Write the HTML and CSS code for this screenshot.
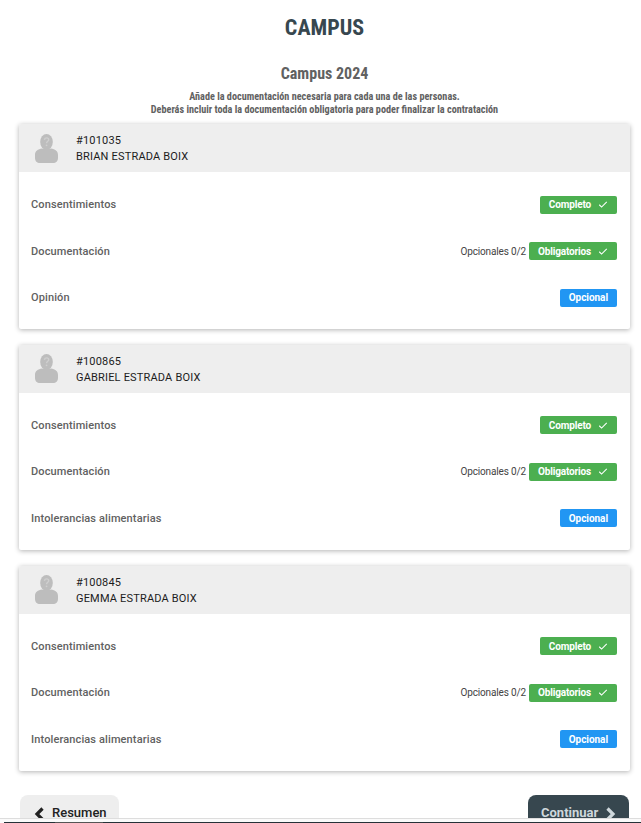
FILE: index.html
```html
<!DOCTYPE html>
<html lang="es">
<head>
<meta charset="utf-8">
<title>Campus</title>
<link rel="stylesheet" href="styles.css">
</head>
<body>
<svg class="defs" width="0" height="0" aria-hidden="true">
  <symbol id="avatar" viewBox="0 0 23 29">
    <ellipse cx="11.500" cy="8" rx="6.300" ry="8" fill="#bdbdbd"/>
    <path fill="#bdbdbd" d="M7 14.500c1.500.8 7.500.8 9 0 4 .5 7 2.500 7 6.500v3c0 3-2 5-5 5H5c-3 0-5-2-5-5v-3c0-4 3-6 7-6.500z"/>
    <path fill="none" stroke="#cfcfcf" stroke-width="1.400" d="M9.400 5.800c.2-1.300 1-1.900 2.200-1.900 1.300 0 2.100.8 2.100 1.800 0 1.600-2.100 1.700-2.100 3.500"/>
    <circle cx="11.600" cy="11.300" r=".9" fill="#cfcfcf"/>
  </symbol>
  <symbol id="check" viewBox="0 0 12 10">
    <path fill="none" stroke="currentColor" stroke-width="1.300" d="M1.500 5.300l2.800 2.800 6.200-6.200"/>
  </symbol>
  <symbol id="chev-left" viewBox="0 0 10 14">
    <path fill="none" stroke="currentColor" stroke-width="3.200" d="M8.500 1.500L3 7l5.500 5.500"/>
  </symbol>
  <symbol id="chev-right" viewBox="0 0 10 14">
    <path fill="none" stroke="currentColor" stroke-width="3.200" d="M1.500 1.500L7 7l-5.500 5.500"/>
  </symbol>
</svg>

<main class="page">
  <h1 class="title">CAMPUS</h1>
  <h2 class="subtitle">Campus 2024</h2>
  <p class="intro">Añade la documentación necesaria para cada una de las personas.<br>Deberás incluir toda la documentación obligatoria para poder finalizar la contratación</p>

  <section class="card">
    <header class="card-head">
      <svg class="avatar"><use href="#avatar"/></svg>
      <div class="person"><div>#101035</div><div>BRIAN ESTRADA BOIX</div></div>
    </header>
    <div class="card-body">
      <div class="row"><span class="label">Consentimientos</span><span class="status"><span class="badge green">Completo<svg class="check"><use href="#check"/></svg></span></span></div>
      <div class="row"><span class="label">Documentación</span><span class="status"><span class="note">Opcionales 0/2</span><span class="badge green">Obligatorios<svg class="check"><use href="#check"/></svg></span></span></div>
      <div class="row"><span class="label">Opinión</span><span class="status"><span class="badge blue">Opcional</span></span></div>
    </div>
  </section>

  <section class="card">
    <header class="card-head">
      <svg class="avatar"><use href="#avatar"/></svg>
      <div class="person"><div>#100865</div><div>GABRIEL ESTRADA BOIX</div></div>
    </header>
    <div class="card-body">
      <div class="row"><span class="label">Consentimientos</span><span class="status"><span class="badge green">Completo<svg class="check"><use href="#check"/></svg></span></span></div>
      <div class="row"><span class="label">Documentación</span><span class="status"><span class="note">Opcionales 0/2</span><span class="badge green">Obligatorios<svg class="check"><use href="#check"/></svg></span></span></div>
      <div class="row"><span class="label">Intolerancias alimentarias</span><span class="status"><span class="badge blue">Opcional</span></span></div>
    </div>
  </section>

  <section class="card">
    <header class="card-head">
      <svg class="avatar"><use href="#avatar"/></svg>
      <div class="person"><div>#100845</div><div>GEMMA ESTRADA BOIX</div></div>
    </header>
    <div class="card-body">
      <div class="row"><span class="label">Consentimientos</span><span class="status"><span class="badge green">Completo<svg class="check"><use href="#check"/></svg></span></span></div>
      <div class="row"><span class="label">Documentación</span><span class="status"><span class="note">Opcionales 0/2</span><span class="badge green">Obligatorios<svg class="check"><use href="#check"/></svg></span></span></div>
      <div class="row"><span class="label">Intolerancias alimentarias</span><span class="status"><span class="badge blue">Opcional</span></span></div>
    </div>
  </section>

  <nav class="actions">
    <a class="btn btn-back"><svg class="chev"><use href="#chev-left"/></svg>Resumen</a>
    <a class="btn btn-next">Continuar<svg class="chev"><use href="#chev-right"/></svg></a>
  </nav>
</main>
<div class="bottom-bar"><div class="task task-a"></div><div class="task task-b"></div><div class="task task-c"></div></div>
</body>
</html>
```
FILE: styles.css
```css
* { box-sizing: border-box; }
html, body { margin: 0; height: 823px; overflow: hidden; background: #fff; }
body { font-family: Roboto, sans-serif; color: #555; position: relative; }
.defs { position: absolute; }
.page { padding: 15px 11px 0 19px; }
.title { margin: 0; height: 26px; font-size: 22px; line-height: 26px; font-weight: 700; text-align: center; color: #37474f; font-stretch: condensed; }
.subtitle { margin: 24px 0 0; height: 18px; font-size: 16px; line-height: 18px; font-weight: 700; text-align: center; color: #616161; font-stretch: condensed; }
.intro { margin: 7px 0 0; font-size: 10.200px; line-height: 13px; font-weight: 700; text-align: center; color: #616161; font-stretch: condensed; }
.card { margin-top: 8.200px; margin-bottom: 16px; border-radius: 2px; background: #fff; box-shadow: 0 1px 5px rgba(0,0,0,.3); overflow: hidden; }
.card + .card { margin-top: 0; }
.card-head { height: 48px; display: flex; align-items: center; background: #eee; padding-left: 16px; }
.avatar { width: 23px; height: 29px; flex: none; }
.person { margin-left: 18px; padding-top: 2px; font-size: 11px; line-height: 16px; color: #1c1c1c; letter-spacing: .18px; }
.card-body { height: 156.800px; padding: 9.100px 13px 0 12px; }
.row { height: 46.500px; display: flex; align-items: center; justify-content: space-between; }
.label { font-size: 11px; font-weight: 500; color: #616161; letter-spacing: .12px; }
.status { display: flex; align-items: center; }
.note { font-size: 10px; color: #444; margin-right: 3px; letter-spacing: -.15px; }
.badge { height: 18px; display: flex; align-items: center; padding: 0 9px; border-radius: 2px; color: #fff; font-size: 10px; font-weight: 700; letter-spacing: -.15px; }
.green { background: #4caf50; }
.blue { background: #2196f3; letter-spacing: -.05px; }
.check { width: 10px; height: 9px; margin-left: 7px; }
.actions { display: flex; justify-content: space-between; padding: 0 1px; margin-top: 24px; }
.btn { height: 44px; display: flex; align-items: flex-start; padding-top: 10px; border-radius: 8px; font-size: 13px; font-weight: 500; line-height: 16px; }
.btn-back { width: 99px; background: #eee; color: #222; padding-left: 14px; }
.btn-next { width: 101px; background: #37474f; color: #cfd8dc; padding-left: 13px; font-weight: 700; }
.chev { width: 10px; height: 14px; margin-top: 2px; }
.btn-back .chev { margin-right: 8px; }
.btn-next .chev { margin-left: 8px; }
.bottom-bar { position: absolute; left: 0; right: 0; top: 818px; height: 5px; background: #fafafa; border-top: 1px solid #ddd; }
.task { position: absolute; bottom: 0; height: 1px; }
.task-a { left: 4px; width: 51px; background: #263238; }
.task-b { left: 55px; width: 48px; background: #555; }
.task-c { left: 103px; right: 0; background: #263238; }
```
